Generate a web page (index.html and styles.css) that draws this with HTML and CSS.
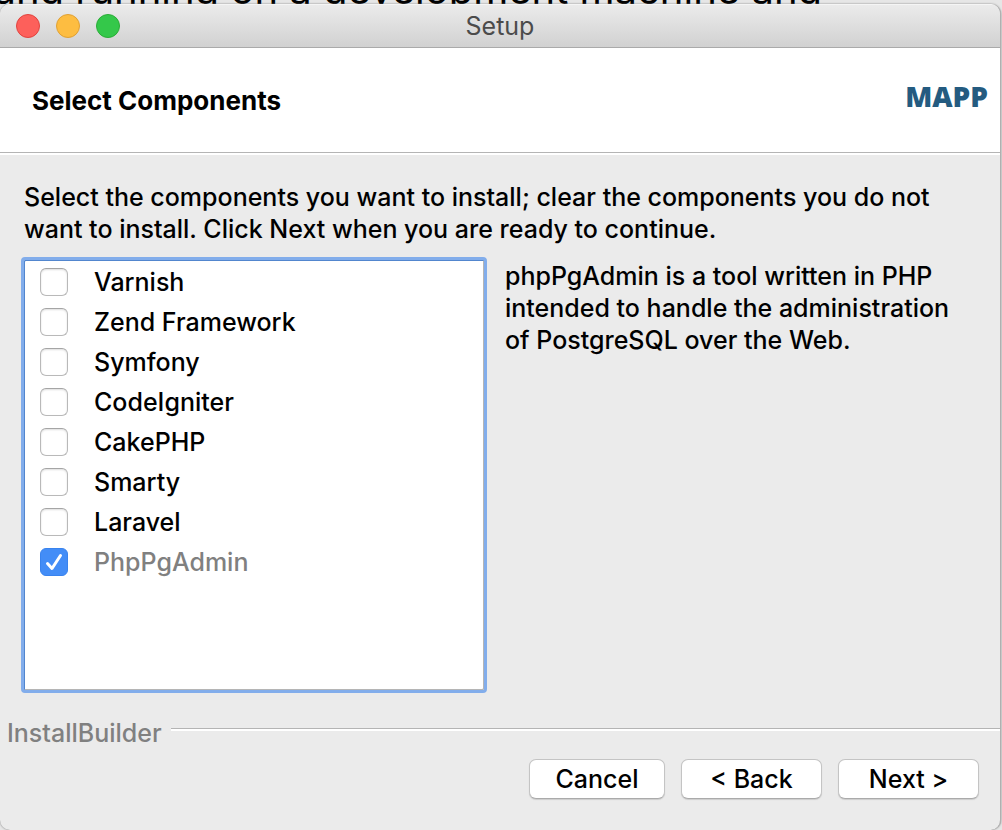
FILE: index.html
```
<!DOCTYPE html>
<html lang="en">
<head>
<meta charset="utf-8">
<title>Setup</title>
<link rel="stylesheet" href="styles.css">
</head>
<body>
<div class="desktop">
  <p class="backdrop-text">and running on a development machine and</p>
  <main class="window">
    <header class="titlebar">
      <div class="lights">
        <button class="light close" type="button" aria-label="Close"></button>
        <button class="light minimize" type="button" aria-label="Minimize"></button>
        <button class="light zoom" type="button" aria-label="Zoom"></button>
      </div>
      <span class="window-title">Setup</span>
    </header>
    <div class="banner">
      <h1 class="heading">Select Components</h1>
      <span class="logo">MAPP</span>
    </div>
    <section class="content">
      <p class="intro">Select the components you want to install; clear the components you do not want to install. Click Next when you are ready to continue.</p>
      <div class="columns">
        <div class="list">
          <label class="item"><input class="check" type="checkbox">Varnish</label>
          <label class="item"><input class="check" type="checkbox">Zend Framework</label>
          <label class="item"><input class="check" type="checkbox">Symfony</label>
          <label class="item"><input class="check" type="checkbox">CodeIgniter</label>
          <label class="item"><input class="check" type="checkbox">CakePHP</label>
          <label class="item"><input class="check" type="checkbox">Smarty</label>
          <label class="item"><input class="check" type="checkbox">Laravel</label>
          <label class="item locked"><input class="check" type="checkbox" checked disabled>PhpPgAdmin<svg class="tick" viewBox="0 0 28 28" aria-hidden="true"><path d="M7.5 15.5 12 20.5 20.5 7.5"/></svg></label>
        </div>
        <p class="description">phpPgAdmin is a tool written in PHP intended to handle the administration of PostgreSQL over the Web.</p>
      </div>
    </section>
    <div class="divider"><span class="brand">InstallBuilder</span><span class="rule"></span></div>
    <footer class="actions">
      <button class="button" type="button">Cancel</button>
      <button class="button step" type="button">&lt; Back</button>
      <button class="button step" type="button">Next &gt;</button>
    </footer>
  </main>
</div>
</body>
</html>
```
FILE: styles.css
```
* { box-sizing: border-box; }
body {
  margin: 0;
  background: #e6e6e6;
  color: #000;
  font: 500 25px/32px Inter, "Liberation Sans", sans-serif;
}
p, h1 { margin: 0; }
.desktop {
  position: relative;
  display: flex;
  min-height: 100vh;
  padding: 4px 1px 0 0;
  overflow: hidden;
}
.backdrop-text {
  position: absolute;
  top: -34px;
  right: 180px;
  font-size: 40px;
  font-weight: 400;
  line-height: 48px;
  white-space: nowrap;
}
.window {
  position: relative;
  display: flex;
  flex-direction: column;
  flex: 1;
  background: #ebebeb;
  border-right: 1px solid #b0b0b0;
  border-radius: 10px;
  box-shadow: 0 0 2px #777;
  overflow: hidden;
}
.titlebar {
  display: grid;
  grid-template-columns: 1fr auto 1fr;
  align-items: center;
  height: 44px;
  padding: 0 16px;
  background: linear-gradient(#ebebeb, #d1d1d1);
  border-top: 1px solid #f5f5f5;
  border-bottom: 1px solid #aaa;
}
.lights { display: flex; gap: 16px; }
.light {
  width: 24px;
  height: 24px;
  padding: 0;
  border: 1px solid;
  border-radius: 50%;
}
.close { background: #fd605b; border-color: #e0443f; }
.minimize { background: #fdbd41; border-color: #dfa035; }
.zoom { background: #34c84a; border-color: #2bac37; }
.window-title { color: #4b4b4b; font-weight: 400; }
.banner {
  display: flex;
  align-items: center;
  justify-content: space-between;
  height: 107px;
  padding: 0 12px 0 32px;
  background: #fff;
  border-bottom: 2px solid #fff;
  box-shadow: inset 0 -1px #b4b4b4;
}
.heading { font-size: 26px; line-height: 32px; font-weight: 700; }
.logo {
  padding-bottom: 10px;
  color: #245b80;
  font: 800 28px/32px "Open Sans", sans-serif;
}
.content { padding: 26px 24px 0 21px; }
.intro { padding-left: 3px; }
.columns { display: flex; gap: 18px; padding-top: 12px; }
.list {
  flex: 0 1 466px;
  min-height: 436px;
  padding: 2px 12px;
  background: #fff;
  border: 3px solid #82adeb;
  border-radius: 4px;
  box-shadow: inset 1px 1px #5286ce, inset -1px -1px #b5b5b5;
}
.item {
  position: relative;
  display: flex;
  align-items: center;
  gap: 26px;
  height: 40px;
  padding-left: 4px;
}
.check {
  appearance: none;
  width: 28px;
  height: 28px;
  margin: 0;
  background: #fff;
  border: 1px solid #b9b9b9;
  border-top-color: #a5a5a5;
  border-radius: 6px;
  box-shadow: inset 0 1px 2px #ddd;
}
.check:checked { background: #438df7; border-color: #3983ee; box-shadow: none; }
.locked { color: #808080; }
.tick {
  position: absolute;
  left: 4px;
  width: 28px;
  height: 28px;
  fill: none;
  stroke: #fff;
  stroke-width: 3;
  stroke-linecap: round;
  stroke-linejoin: round;
}
.description { flex: 1 1 300px; padding-top: 3px; }
.divider {
  display: flex;
  gap: 9px;
  padding: 24px 0 0 7px;
  color: #808080;
}
.rule {
  flex: 1;
  height: 3px;
  margin-top: 11px;
  background: #fff;
  border-top: 1px solid #b4b4b4;
}
.actions {
  display: flex;
  justify-content: flex-end;
  gap: 16px;
  padding: 10px 21px 30px;
}
.button {
  min-width: 136px;
  height: 40px;
  padding: 0 20px;
  color: #000;
  background: #fff;
  border: 1px solid #c4c4c4;
  border-bottom-color: #aaa;
  border-radius: 7px;
  box-shadow: 0 1px 1px #ccc;
  font: inherit;
}
.step { min-width: 141px; }
```
